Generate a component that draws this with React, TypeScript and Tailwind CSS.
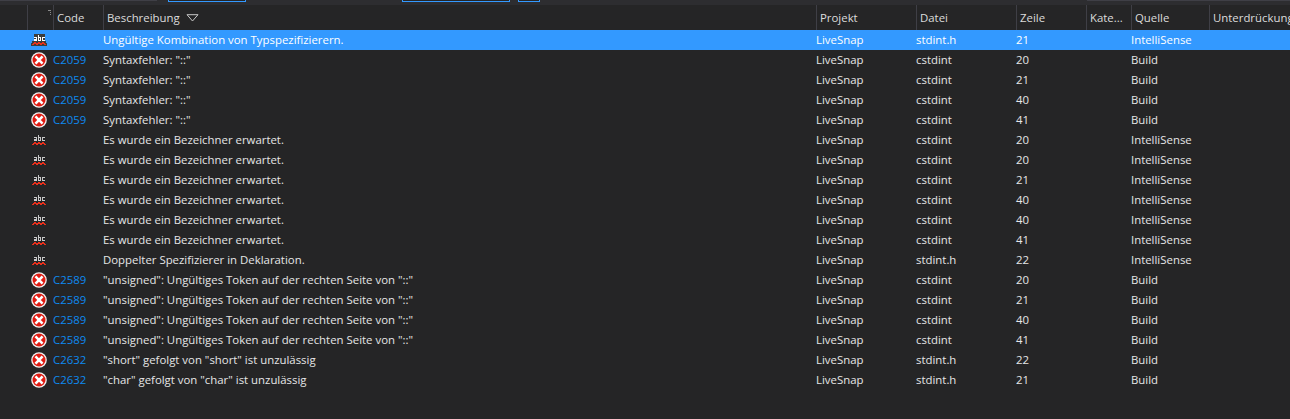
const F = "Ungültige Kombination von Typspezifizierern.";
type R = { i: "e" | "a" | "s"; c?: string; d: string; f: string; l: string; q: string };
const syn = 'Syntaxfehler: "::"';
const bez = "Es wurde ein Bezeichner erwartet.";
const tok = '"unsigned": Ungültiges Token auf der rechten Seite von "::"';
const rows: R[] = [
  { i: "s", d: F, f: "stdint.h", l: "21", q: "IntelliSense" },
  { i: "e", c: "C2059", d: syn, f: "cstdint", l: "20", q: "Build" },
  { i: "e", c: "C2059", d: syn, f: "cstdint", l: "21", q: "Build" },
  { i: "e", c: "C2059", d: syn, f: "cstdint", l: "40", q: "Build" },
  { i: "e", c: "C2059", d: syn, f: "cstdint", l: "41", q: "Build" },
  { i: "a", d: bez, f: "cstdint", l: "20", q: "IntelliSense" },
  { i: "a", d: bez, f: "cstdint", l: "20", q: "IntelliSense" },
  { i: "a", d: bez, f: "cstdint", l: "21", q: "IntelliSense" },
  { i: "a", d: bez, f: "cstdint", l: "40", q: "IntelliSense" },
  { i: "a", d: bez, f: "cstdint", l: "40", q: "IntelliSense" },
  { i: "a", d: bez, f: "cstdint", l: "41", q: "IntelliSense" },
  { i: "a", d: "Doppelter Spezifizierer in Deklaration.", f: "stdint.h", l: "22", q: "IntelliSense" },
  { i: "e", c: "C2589", d: tok, f: "cstdint", l: "20", q: "Build" },
  { i: "e", c: "C2589", d: tok, f: "cstdint", l: "21", q: "Build" },
  { i: "e", c: "C2589", d: tok, f: "cstdint", l: "40", q: "Build" },
  { i: "e", c: "C2589", d: tok, f: "cstdint", l: "41", q: "Build" },
  { i: "e", c: "C2632", d: '"short" gefolgt von "short" ist unzulässig', f: "stdint.h", l: "22", q: "Build" },
  { i: "e", c: "C2632", d: '"char" gefolgt von "char" ist unzulässig', f: "stdint.h", l: "21", q: "Build" },
];

function ErrIcon() {
  return (
    <svg width="16" height="16" viewBox="0 0 17 17" className="shrink-0">
      <circle cx="8.5" cy="8.5" r="8.3" fill="#f2f2f2" />
      <circle cx="8.5" cy="8.5" r="6.9" fill="#e01b12" />
      <path d="M5.7 5.7l5.6 5.6M11.3 5.7l-5.6 5.6" stroke="#fff" strokeWidth="2.7" strokeLinecap="square" />
    </svg>
  );
}

function AbcIcon({ selected }: { selected: boolean }) {
  return (
    <svg width="16" height="16" viewBox="0 0 16 16" className="shrink-0" shapeRendering="crispEdges">
      {selected && <path d="M3 2h11v7h1v2h1v3H0v-3h1V9h2z" fill="#3c3c3c" />}
      <g fill={selected ? "#fff" : "#c8c8c8"}>
        <path d="M3 5h3v1H3zM5 6h1v3H5zM3 7h2v1H3zM3 8h1v1H3zM3 8h2v1H3z" />
        <path d="M7 3h1v6H7zM8 5h2v1H8zM9 6h1v2H9zM8 8h2v1H8z" />
        <path d="M11 5h3v1h-3zM11 6h1v2h-1zM11 8h3v1h-3z" />
      </g>
      <path d="M3 10h2v1H3zM7 10h2v1H7zM11 10h2v1h-2zM2 11h12v1H2zM1 12h2v1H1zM5 12h2v1H5zM9 12h2v1H9zM13 12h2v1h-2z" fill="#e8301c" />
    </svg>
  );
}

function Head({ w, children }: { w: string; children?: React.ReactNode }) {
  return (
    <div className={`${w} shrink-0 h-full pl-[3px] border-l border-[#3f3f46] flex items-center whitespace-nowrap overflow-hidden`}>
      {children}
    </div>
  );
}

export default function App() {
  return (
    <div className="w-[1290px] h-[419px] overflow-hidden bg-[#252526] text-[#e6e6e6] text-[11.4px] leading-[20px] font-['Open_Sans','Noto_Sans',sans-serif]">
      <div className="h-[5px] bg-[#2d2d30] flex items-start">
        <div className="w-[157px] h-[1px] shrink-0 bg-[#3f3f46]" />
        <div className="w-[11px] shrink-0" />
        <div className="w-[78px] h-[2px] shrink-0 border-x border-b border-[#3399ff] bg-[#252526]" />
        <div className="w-[156px] shrink-0" />
        <div className="w-[108px] h-[2px] shrink-0 border-x border-b border-[#3399ff] bg-[#252526]" />
        <div className="w-[8px] shrink-0" />
        <div className="w-[22px] h-[2px] shrink-0 border-x border-b border-[#3399ff] bg-[#252526]" />
        <div className="w-[547px] shrink-0" />
        <div className="w-[203px] h-[1px] shrink-0 bg-[#3f3f46]" />
      </div>
      <div className="h-[25px] flex text-[#dcdcdc]">
        <div className="w-[27px] shrink-0" />
        <Head w="w-[26px]">
          <svg width="8" height="8" viewBox="0 0 8 8" className="ml-[15px] mb-[12px]" shapeRendering="crispEdges">
            <path d="M0 0h6v1H0zM2 2h4v1H2zM4 4h2v1H4zM5 6h1v1H5z" fill="#8a8a8a" />
          </svg>
        </Head>
        <Head w="w-[50px]">Code</Head>
        <Head w="w-[713px]">
          Beschreibung
          <svg width="13" height="8" viewBox="0 0 13 8" className="ml-[6px]">
            <path d="M1 .7h11L6.5 7z" fill="none" stroke="#c8c8c8" strokeWidth="1" />
          </svg>
        </Head>
        <Head w="w-[100px]">Projekt</Head>
        <Head w="w-[100px]">Datei</Head>
        <Head w="w-[70px]">Zeile</Head>
        <Head w="w-[45px]">Kate...</Head>
        <Head w="w-[78px]">Quelle</Head>
        <Head w="w-[81px]">Unterdrückung</Head>
      </div>
      {rows.map((r, i) => (
        <div key={i} className={`h-[20px] flex ${i === 0 ? "bg-[#3399ff] text-white" : ""}`}>
          <div className="w-[31px] shrink-0" />
          <div className="w-[17px] shrink-0 flex items-center justify-start">
            {r.i === "e" ? <ErrIcon /> : <AbcIcon selected={r.i === "s"} />}
          </div>
          <div className="w-[5px] shrink-0" />
          <div className="w-[50px] shrink-0 text-[#0e8af0]">{r.c}</div>
          <div className="w-[713px] shrink-0 whitespace-nowrap">{r.d}</div>
          <div className="w-[100px] shrink-0">LiveSnap</div>
          <div className="w-[100px] shrink-0">{r.f}</div>
          <div className="w-[115px] shrink-0">{r.l}</div>
          <div className="w-[80px] shrink-0">{r.q}</div>
        </div>
      ))}
    </div>
  );
}
